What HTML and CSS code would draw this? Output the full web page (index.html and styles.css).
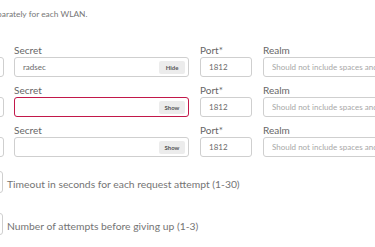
FILE: index.html
```html
<!DOCTYPE html>
<html lang="en">
<head>
<meta charset="utf-8">
<title>RADIUS servers</title>
<link rel="stylesheet" href="styles.css">
</head>
<body>
<div class="page">
  <p class="intro">separately for each WLAN.</p>

  <div class="servers">
    <div class="server-row">
      <div class="field host"><span class="label spacer"></span><div class="input"></div></div>
      <div class="field secret"><label class="label">Secret</label><div class="input"><span class="value">radsec</span><span class="toggle">Hide</span></div></div>
      <div class="field port"><label class="label">Port*</label><div class="input"><span class="value">1812</span></div></div>
      <div class="field realm"><label class="label">Realm</label><div class="input"><span class="placeholder">Should not include spaces and special characters</span></div></div>
    </div>
    <div class="server-row">
      <div class="field host"><span class="label spacer"></span><div class="input"></div></div>
      <div class="field secret"><label class="label">Secret</label><div class="input error"><span class="value"></span><span class="toggle">Show</span></div></div>
      <div class="field port"><label class="label">Port*</label><div class="input"><span class="value">1812</span></div></div>
      <div class="field realm"><label class="label">Realm</label><div class="input"><span class="placeholder">Should not include spaces and special characters</span></div></div>
    </div>
    <div class="server-row">
      <div class="field host"><span class="label spacer"></span><div class="input"></div></div>
      <div class="field secret"><label class="label">Secret</label><div class="input"><span class="value"></span><span class="toggle">Show</span></div></div>
      <div class="field port"><label class="label">Port*</label><div class="input"><span class="value">1812</span></div></div>
      <div class="field realm"><label class="label">Realm</label><div class="input"><span class="placeholder">Should not include spaces and special characters</span></div></div>
    </div>
  </div>

  <div class="option">
    <div class="input small"></div>
    <span class="help">Timeout in seconds for each request attempt (1-30)</span>
  </div>
  <div class="option second">
    <div class="input small"></div>
    <span class="help">Number of attempts before giving up (1-3)</span>
  </div>
</div>
</body>
</html>
```

FILE: styles.css
```css
html, body {
  margin: 0;
  padding: 0;
  background: #ffffff;
  overflow: hidden;
}

body {
  font-family: Lato, "Open Sans", "Liberation Sans", sans-serif;
  color: #6b6b6b;
  width: 375px;
  height: 247px;
}

.page {
  margin-left: -120px;
  width: 700px;
}

.intro {
  margin: 0 0 0 109px;
  padding-top: 8px;
  height: 43px;
  font-size: 8.4px;
  line-height: 12px;
  color: #777777;
  box-sizing: border-box;
}

.servers {
  display: flex;
  flex-direction: column;
  gap: 6px;
}

.server-row {
  display: grid;
  grid-template-columns: 123px 175px 52px 200px;
  column-gap: 11px;
}

.server-row .host { margin-right: -1px; }

.field {
  display: flex;
  flex-direction: column;
}

.label {
  font-size: 10px;
  line-height: 14px;
  color: #666666;
}

.spacer {
  height: 14px;
}

.input {
  box-sizing: border-box;
  height: 20px;
  border: 1px solid #cfcfcf;
  border-radius: 3px;
  background: #fff;
  display: flex;
  align-items: center;
  padding: 0 3px 0 8px;
}

.input.error {
  border-color: #c2184a;
}

.value {
  flex: 1;
  font-size: 8px;
  color: #6a6a6a;
}

.placeholder {
  font-size: 8px;
  color: #a8a8a8;
  white-space: nowrap;
  overflow: hidden;
}

.toggle {
  height: 13px;
  width: 26px;
  margin-top: 1px;
  border-radius: 2px;
  background: #ececec;
  font-size: 6px;
  font-weight: 700;
  color: #555;
  display: flex;
  align-items: center;
  justify-content: center;
}

.option {
  display: flex;
  align-items: center;
  gap: 4px;
  margin-top: 14px;
}

.option.second {
  margin-top: 20px;
}

.input.small {
  width: 123px;
  height: 22px;
}

.help {
  font-size: 10.35px;
  line-height: 14px;
  color: #747474;
  padding-top: 4px;
}
```
